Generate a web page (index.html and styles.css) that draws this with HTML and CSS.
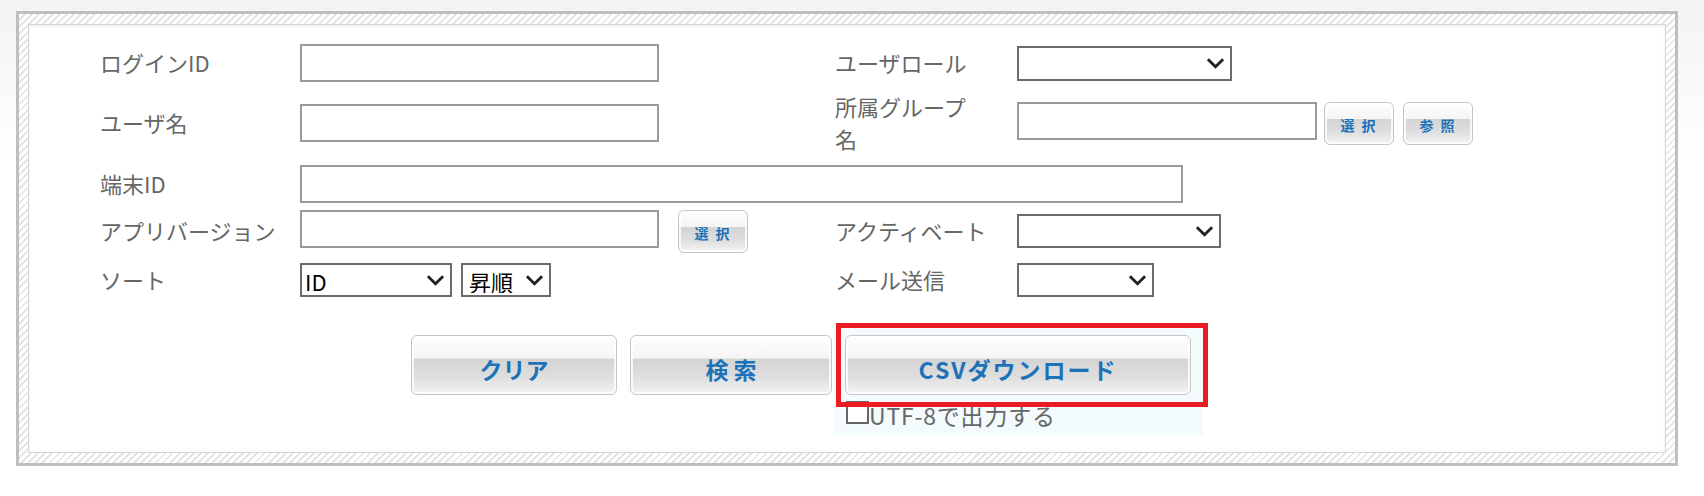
FILE: index.html
```html
<!DOCTYPE html>
<html lang="ja">
<head>
    <meta charset="UTF-8">
    <meta name="viewport" content="width=device-width, initial-scale=1.0">
    <title>ユーザ検索</title>
    <link rel="stylesheet" href="styles.css">
</head>
<body>
    <div class="search-frame">
        <div class="search-panel">
            <div class="search-form">
                <label class="lbl">ログインID</label>
                <div class="fld"><input type="text" class="txt txt-mid"></div>
                <label class="lbl lbl-r">ユーザロール</label>
                <div class="fld">
                    <span class="sel sel-role">
                        <select><option></option></select>
                        <svg class="chev" viewBox="0 0 20 12"><path d="M2 2l8 8 8-8"/></svg>
                    </span>
                </div>

                <label class="lbl">ユーザ名</label>
                <div class="fld"><input type="text" class="txt txt-mid"></div>
                <label class="lbl lbl-r">所属グループ名</label>
                <div class="fld fld-btns">
                    <input type="text" class="txt txt-group">
                    <button class="btn-sm btn-first">選 択</button>
                    <button class="btn-sm">参 照</button>
                </div>

                <label class="lbl">端末ID</label>
                <div class="fld fld-wide"><input type="text" class="txt txt-wide"></div>

                <label class="lbl">アプリバージョン</label>
                <div class="fld fld-btns">
                    <input type="text" class="txt txt-mid">
                    <button class="btn-sm btn-ver">選 択</button>
                </div>
                <label class="lbl lbl-r lbl-one">アクティベート</label>
                <div class="fld">
                    <span class="sel sel-active">
                        <select><option></option></select>
                        <svg class="chev" viewBox="0 0 20 12"><path d="M2 2l8 8 8-8"/></svg>
                    </span>
                </div>

                <label class="lbl">ソート</label>
                <div class="fld">
                    <span class="sel sel-sort">
                        <select><option>ID</option><option>ログインID</option><option>ユーザ名</option></select>
                        <svg class="chev" viewBox="0 0 20 12"><path d="M2 2l8 8 8-8"/></svg>
                    </span>
                    <span class="sel sel-order">
                        <select><option>昇順</option><option>降順</option></select>
                        <svg class="chev" viewBox="0 0 20 12"><path d="M2 2l8 8 8-8"/></svg>
                    </span>
                </div>
                <label class="lbl lbl-r">メール送信</label>
                <div class="fld">
                    <span class="sel sel-mail">
                        <select><option></option></select>
                        <svg class="chev" viewBox="0 0 20 12"><path d="M2 2l8 8 8-8"/></svg>
                    </span>
                </div>
            </div>

            <div class="actions">
                <button class="btn-lg btn-clear">クリア</button>
                <button class="btn-lg btn-search">検 索</button>
                <div class="csv-cell">
                    <button class="btn-lg btn-csv">CSVダウンロード</button>
                    <label class="utf8"><input type="checkbox" class="chk">UTF-8で出力する</label>
                    <div class="mark"></div>
                </div>
            </div>
        </div>
    </div>
</body>
</html>
```

FILE: styles.css
```css
body {
    margin: 0;
    min-height: 496px;
    background: linear-gradient(#f3f3f3, #fff 160px) no-repeat;
    font-family: "Noto Sans CJK JP", "Noto Sans", sans-serif;
    color: #666;
}

.search-frame {
    box-sizing: border-box;
    display: flex;
    width: 1662px;
    height: 455px;
    margin: 11px 0 0 16px;
    padding: 10px 9px;
    border: 3px solid #bfbfbf;
    background: repeating-linear-gradient(135deg, #fff 0, #fff 3px, #e6e6e6 3px, #e6e6e6 5px);
}

.search-panel {
    flex: 1;
    padding: 15px 0 0 71px;
    background: #fff;
    border: 1px solid #d6d6d6;
    box-shadow: inset 0 1px 3px rgba(0, 0, 0, 0.08);
}

.search-form {
    display: grid;
    grid-template-columns: 200px 534px 183px auto;
    grid-template-rows: 46px 74px 48px 46px 52px;
    align-items: center;
    font-size: 22px;
}

.lbl {
    line-height: 32px;
    margin-top: -2px;
}

.lbl-r {
    width: 140px;
    padding-left: 1px;
}

.lbl-one {
    white-space: nowrap;
}

.fld {
    display: flex;
    align-items: center;
}

.fld-btns {
    align-items: flex-start;
}

.fld-wide {
    grid-column: span 3;
}

.txt {
    box-sizing: border-box;
    height: 38px;
    margin: 0;
    border: 2px solid #9a9a9a;
    background: #fff;
}

.txt-mid {
    width: 359px;
}

.txt-wide {
    width: 883px;
}

.txt-group {
    width: 300px;
}

.sel {
    position: relative;
    display: inline-block;
}

.sel select {
    box-sizing: border-box;
    display: block;
    width: 100%;
    height: 34px;
    margin: 0;
    padding: 0 0 2px 3px;
    border: 2px solid #6c6c6c;
    border-radius: 0;
    background: #fff;
    appearance: none;
    font-family: "Noto Sans CJK JP", "Noto Sans", sans-serif;
    font-size: 22px;
    color: #000;
}

.chev {
    position: absolute;
    right: 7px;
    top: 50%;
    width: 19px;
    height: 12px;
    margin-top: -6px;
    fill: none;
    stroke: #222;
    stroke-width: 3;
    pointer-events: none;
}

.sel-role {
    width: 215px;
}

.sel-role select {
    height: 35px;
}

.sel-active {
    width: 204px;
}

.sel-mail {
    width: 137px;
}

.sel-sort {
    width: 152px;
}

.sel-order {
    width: 90px;
    margin-left: 9px;
}

.sel-order select {
    padding-left: 6px;
}

.btn-sm,
.btn-lg {
    box-sizing: border-box;
    margin: 0;
    border: 1px solid #c6c6c6;
    border-radius: 6px;
    background: linear-gradient(#fefefe 0%, #f5f5f5 38%, #d4d4d4 40%, #dedede 70%, #f3f3f3 100%);
    box-shadow: inset 0 0 0 2px rgba(255, 255, 255, 0.8);
    color: #1c72b8;
    font-family: "Noto Sans CJK JP", "Noto Sans", sans-serif;
    font-weight: bold;
    cursor: pointer;
}

.btn-sm {
    width: 70px;
    height: 43px;
    padding: 4px 0 0;
    font-size: 14px;
    letter-spacing: 2px;
}

.btn-first {
    margin-left: 7px;
}

.btn-sm + .btn-sm {
    margin-left: 9px;
}

.btn-ver {
    margin-left: 19px;
}

.actions {
    display: flex;
    align-items: flex-start;
    margin: 21px 0 0 311px;
}

.btn-lg {
    height: 60px;
    margin-top: 8px;
    padding: 8px 0 0;
    font-size: 23px;
}

.btn-clear {
    width: 206px;
    margin-right: 13px;
}

.btn-search {
    width: 202px;
    margin-right: 2px;
}

.csv-cell {
    position: relative;
    padding: 8px 12px 6px 11px;
    background: #f3fbfd;
}

.btn-csv {
    display: block;
    width: 346px;
    margin-top: 0;
    letter-spacing: 2px;
}

.utf8 {
    display: flex;
    align-items: flex-start;
    margin-top: 6px;
    font-size: 23px;
    line-height: 28px;
    letter-spacing: 0.8px;
    color: #666;
}

.chk {
    box-sizing: border-box;
    width: 23px;
    height: 23px;
    margin: 0 0 0 1px;
    border: 2px solid #666;
    background: #fff;
    appearance: none;
}

.mark {
    position: absolute;
    left: 2px;
    top: -4px;
    box-sizing: border-box;
    width: 372px;
    height: 84px;
    border: 5px solid #ed1c24;
    pointer-events: none;
}
```
